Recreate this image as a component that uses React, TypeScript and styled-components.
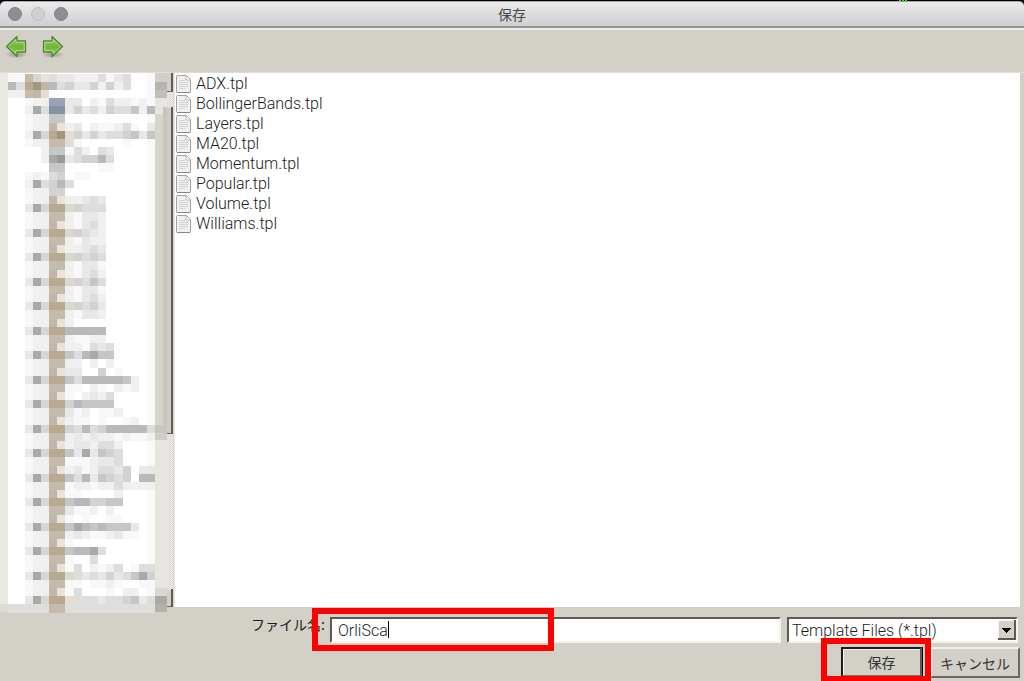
import React from "react";
import styled, { createGlobalStyle } from "styled-components";

const latin = `Roboto, "Noto Sans CJK JP", sans-serif`;
const japanese = `"Noto Sans CJK JP", sans-serif`;
const face = "#d3d0c8";

const GlobalStyle = createGlobalStyle`
  *, *::before, *::after { box-sizing: border-box; }
  body { margin: 0; background: #000; color: #1c1c1c; font-family: ${latin}; overflow: hidden; }
`;

const Dialog = styled.div`
  position: relative;
  display: flex;
  flex-direction: column;
  min-height: 100vh;
  padding-top: 1px;
`;

const Sparks = styled.svg`
  position: absolute;
  top: 0;
  right: 115px;
  display: block;
`;

const TitleBar = styled.header`
  display: flex;
  align-items: center;
  height: 27px;
  padding: 0 8px;
  border-top: 1px solid #aaa8aa;
  border-bottom: 2px solid #949494;
  border-radius: 5px 5px 0 0;
  background: linear-gradient(#ebe9eb, #d0d0d0);
`;

const Lights = styled.div`
  display: flex;
  flex: 1;
  gap: 9px;
`;

const Light = styled.button<{ $idle?: boolean }>`
  width: 14px;
  height: 14px;
  padding: 0;
  border: 1px solid ${(p) => (p.$idle ? "#bdbdbd" : "#848388")};
  border-radius: 50%;
  background: ${(p) => (p.$idle ? "#d0d0d0" : "#8e8d93")};
`;

const Title = styled.h1`
  margin: 0;
  font: 400 14px/20px ${japanese};
  color: #484848;
`;

const Filler = styled.div`
  flex: 1;
`;

const Toolbar = styled.nav`
  display: flex;
  gap: 11px;
  height: 45px;
  padding: 5px 4px;
  border-top: 2px solid #ecebe9;
  border-bottom: 1px solid #dedcd6;
  background: ${face};
`;

const ToolButton = styled.button`
  width: 25px;
  height: 25px;
  padding: 0;
  border: 0;
  background: none;
`;

const Body = styled.main`
  display: flex;
  flex: 1;
  padding-right: 4px;
  background: ${face};
`;

const TreePane = styled.aside`
  position: relative;
  z-index: 1;
  flex: none;
  width: 174px;
  height: 534px;
`;

const TreeArt = styled.svg`
  display: block;
  overflow: visible;
`;

const FileList = styled.ul`
  flex: 1;
  margin: 0;
  padding: 1px;
  list-style: none;
  background: #fff;
  border-left: 1px solid #eceae6;
`;

const FileRow = styled.li`
  display: flex;
  align-items: center;
  gap: 5px;
  height: 20px;
  font-size: 16px;
  font-weight: 300;
  line-height: 20px;
`;

const Footer = styled.form`
  display: flex;
  flex-direction: column;
  gap: 4px;
  height: 74px;
  padding: 10px 4px 0 251px;
  background: ${face};
`;

const FieldRow = styled.div`
  display: flex;
  gap: 6px;
  padding-right: 2px;
`;

const Label = styled.label`
  width: 73px;
  font: 400 14px/14px ${japanese};
  white-space: nowrap;
`;

const Field = styled.div<{ $width?: number }>`
  position: relative;
  display: flex;
  flex: ${(p) => (p.$width ? `0 0 ${p.$width}px` : "1")};
  height: 26px;
`;

const sunken = `
  width: 100%;
  border: 2px solid;
  border-color: #5c5a57 #f4f3f0 #f4f3f0 #5c5a57;
  border-radius: 0;
  outline: 0;
  background: #fff;
  color: #1c1c1c;
  font-family: ${latin};
  font-size: 16px;
  font-weight: 300;
`;

const TextInput = styled.input`
  ${sunken}
  padding: 0 6px;
`;

const Select = styled.select`
  ${sunken}
  appearance: none;
  padding: 0 20px 0 3px;
`;

const Caret = styled.span`
  position: absolute;
  left: 58px;
  top: 4px;
  width: 1px;
  height: 17px;
  background: #000;
`;

const SelectArrow = styled.svg`
  position: absolute;
  right: 2px;
  top: 3px;
  pointer-events: none;
`;

const Highlight = styled.span<{ $kind: "field" | "button" }>`
  position: absolute;
  z-index: 2;
  top: -9px;
  left: ${(p) => (p.$kind === "field" ? -18 : -20)}px;
  width: ${(p) => (p.$kind === "field" ? 242 : 110)}px;
  height: ${(p) => (p.$kind === "field" ? 43 : 44)}px;
  border: 6px solid #fe0000;
  pointer-events: none;
`;

const Actions = styled.div`
  display: flex;
  justify-content: flex-end;
  gap: 8px;
`;

const ButtonSlot = styled.div`
  position: relative;
`;

const Button = styled.button<{ $primary?: boolean }>`
  display: block;
  width: ${(p) => (p.$primary ? 81 : 90)}px;
  height: ${(p) => (p.$primary ? 30 : 31)}px;
  padding: 0;
  border: 2px solid;
  border-color: ${(p) => (p.$primary ? "#1c1c1c #5a5957 #77756f #1c1c1c" : "#f0efec #6a6966 #6a6966 #f0efec")};
  box-shadow: ${(p) => (p.$primary ? "inset 1px 1px #f4f3f0, 1px 0 #000" : "none")};
  background: ${face};
  color: #333;
  font: 400 14px/24px ${japanese};
`;

const palette: Record<string, string> = {
  a: "#f8f8f8", b: "#f0f0f0", c: "#e8e8e8", d: "#dddddd", e: "#d2d2d2",
  f: "#c6c6c6", g: "#b9b9b9", h: "#a9a9a9", i: "#989a98",
  T: "#c1b6a7", U: "#ebe3d9", V: "#b7aa90", W: "#a3967f", X: "#c4bbac",
  Y: "#e5ddd4", Z: "#d9d5cf", y: "#dad8cf", P: "#98a4b6", Q: "#8591a4",
  G: "#c5c8c5", o: "#dedfda",
};

// Columns 1 to 19 of the tree's first five entries, three lines an entry.
const headLines = [
  "aaXZUdccbbbdacd..a",
  "gdVWTgdeccebebd..a",
  "bbXTY............a",
  "..abbPPcc.badbbaba",
  "..bhdQQcecdbeddfbg",
  "..abbGG...........",
  "..abbTUbc.baabda.c",
  "..bhZVWYececddefcf",
  "..abbXXYa.....a...",
  "....bGGadb.dc.....",
  "....bhicdeegd.....",
  ".....ff....aa.....",
  "..abade.aa........",
  "..bhdegd..........",
  "..abbee...........",
];

// Columns 8 to 19 of every folder entry: upper, middle and lower line.
const folders = [
  ["bbcdc", "yeddd", "baccb"],
  ["bacdb", "yedcb", "bacbb"],
  ["bbcdc", "yeded", "bacca"],
  ["bacdb", "yedfd", "bacca"],
  ["bacdb", "yedec", "baccb"],
  ["b", "ggggg", "baabb"],
  ["bbadcd", "fdghff", "bb.b.b"],
  ["cc..e.a", "fdgggggfb", "aa.ba.bab"],
  ["a.bcbd", "egffff", "cab.aab"],
  ["baa.a..ab", "edgdegggggdf", "bcbcbbabaab"],
  ["bccbddb", "fchcfed", "aaabccd"],
  ["bcabddce.cc", "fdgcfede.gg", "abbabbdbbbb"],
  ["aa....b", "fggeeff", "caab.b"],
  ["a.a..aa", "fhgfgfffc", "bcbaabcaa"],
  ["a......", "fgghd", "a..d"],
  ["ad.babd.add", "ydcdcecdfhe", "aa.aaba..aa"],
  ["ad...a.bb.a", "Ydddcddefcd", "ooooooooooo"],
];

const lines = [
  ...headLines,
  ...folders.flatMap(([upper, middle, lower], i) => [
    "..abbTU" + upper,
    "..chZVV" + middle,
    (i === folders.length - 1 ? "oooooXX" : "..abbXX") + lower,
  ]),
];

const CELL = 49 / 6;

function Tree() {
  return (
    <TreeArt width="174" height="539" viewBox="0 73 174 539" role="img" aria-label="Folders" shapeRendering="crispEdges">
      <defs>
        <pattern id="trough" width="2" height="2" patternUnits="userSpaceOnUse">
          <rect width="2" height="2" fill="#f1f0ed" />
          <rect width="1" height="1" fill="#d8d5cf" />
          <rect x="1" y="1" width="1" height="1" fill="#d8d5cf" />
        </pattern>
      </defs>
      <rect y="73" width="174" height="534" fill="#fff" />
      <rect y="73" width="8" height="531" fill="#eae9e4" />
      <rect y="604" width="8" height="8" fill="#dddcd6" />
      <rect x="147" y="73" width="8" height="531" fill="#f9f9f7" />
      <rect x="155" y="73" width="19" height="534" fill="#e7e5e0" />
      <rect x="155" y="114" width="8" height="320" fill="#d8d5cd" />
      <rect x="163" y="107" width="4" height="333" fill="#c7c5bf" />
      <rect x="155" y="434" width="12" height="6" fill="#cfcdc7" />
      <rect x="167" y="73" width="5" height="534" fill="url(#trough)" />
      <rect x="167" y="73" width="4" height="18" fill={face} />
      <rect x="167" y="108" width="4" height="325" fill="#cfccc4" />
      <rect x="167" y="590" width="4" height="16" fill={face} />
      {lines.map((line, row) =>
        [...line].map((code, col) =>
          palette[code] ? (
            <rect
              key={`${row}-${col}`}
              x={(col + 1) * CELL}
              y={Math.max(73, (row + 9) * CELL)}
              width={CELL}
              height={CELL}
              fill={palette[code]}
            />
          ) : null
        )
      )}
      <rect x="155" y="73" width="12" height="9" fill="#cfcec9" />
      <rect x="155" y="82" width="12" height="8" fill="#b5b4af" />
      <rect x="155" y="90" width="12" height="8" fill="#c0bfba" />
      <rect x="155" y="588" width="12" height="8" fill="#d9d7d1" />
      <rect x="155" y="596" width="12" height="8" fill="#aaa9a3" />
      <rect x="155" y="604" width="12" height="8" fill="#b3b1aa" />
      <path d="M167 91.500h5M167 433.500h5M167 606.500h5" stroke="#666" />
      <path d="M172 73v19M172 107v327M172 589v18" stroke="#5c5c5c" strokeWidth="2" />
      <path d="M173.500 73v534" stroke="#d8d6d0" />
    </TreeArt>
  );
}

function Arrow({ forward }: { forward?: boolean }) {
  return (
    <svg width="25" height="25" viewBox="0 0 25 25">
      <defs>
        <linearGradient id={forward ? "fwd" : "bwd"} x1="0" y1="0" x2="0" y2="1">
          <stop offset="0" stopColor="#a2cd7c" />
          <stop offset=".5" stopColor="#73b536" />
          <stop offset="1" stopColor="#8acb50" />
        </linearGradient>
        <radialGradient id={forward ? "fwdShade" : "bwdShade"}>
          <stop offset="0" stopColor="#706d64" stopOpacity=".6" />
          <stop offset="1" stopColor="#706d64" stopOpacity="0" />
        </radialGradient>
      </defs>
      <g transform={forward ? "translate(25 0)scale(-1 1)" : undefined}>
        <ellipse cx="12.500" cy="19.500" rx="11.500" ry="4" fill={`url(#${forward ? "fwdShade" : "bwdShade"})`} />
        <path d="M2.500 11.500 13 1.500v4.500H21.500v11H13v4.500z" fill={`url(#${forward ? "fwd" : "bwd"})`} stroke="#548530" strokeWidth="1.300" strokeLinejoin="round" />
        <path d="M4.500 11.500 11.800 4.500v2.800H20.200v8.400H11.800v2.800z" fill="none" stroke="#b5d995" strokeWidth="1" />
      </g>
    </svg>
  );
}

function FileIcon() {
  return (
    <svg width="15" height="18" viewBox="0 0 15 18">
      <path d="M1.500.500h9l4 4v12q0 1-1 1h-12q-1 0-1-1v-15q0-1 1-1z" fill="#f0f0ef" stroke="#a2a3a0" />
      <path d="M10 1v4h4.500" fill="#fff" stroke="#b4b4b4" />
      <path d="M3 5.500h6M3 7.500h9M3 9.500h9M3 11.500h9M3 13.500h6" stroke="#d3d3d3" />
      <path d="M1 17.500h13" stroke="#858683" />
    </svg>
  );
}

const files = [
  "ADX.tpl",
  "BollingerBands.tpl",
  "Layers.tpl",
  "MA20.tpl",
  "Momentum.tpl",
  "Popular.tpl",
  "Volume.tpl",
  "Williams.tpl",
];

export default function App() {
  return (
    <>
      <GlobalStyle />
      <Dialog>
        <Sparks width="10" height="2">
          <path d="M1 0v1M4 0v2M7 0v2" stroke="#55c832" strokeWidth="2" />
        </Sparks>
        <TitleBar>
          <Lights>
            <Light aria-label="Close" />
            <Light $idle aria-label="Minimize" />
            <Light aria-label="Zoom" />
          </Lights>
          <Title>保存</Title>
          <Filler />
        </TitleBar>
        <Toolbar>
          <ToolButton aria-label="Back"><Arrow /></ToolButton>
          <ToolButton aria-label="Forward"><Arrow forward /></ToolButton>
        </Toolbar>
        <Body>
          <TreePane><Tree /></TreePane>
          <FileList>
            {files.map((name) => (
              <FileRow key={name}><FileIcon />{name}</FileRow>
            ))}
          </FileList>
        </Body>
        <Footer onSubmit={(e) => e.preventDefault()}>
          <FieldRow>
            <Label htmlFor="filename">ファイル名:</Label>
            <Field>
              <TextInput id="filename" defaultValue="OrliSca" />
              <Caret />
              <Highlight $kind="field" />
            </Field>
            <Field $width={231}>
              <Select aria-label="File type">
                <option>Template Files (*.tpl)</option>
              </Select>
              <SelectArrow width="18" height="20" viewBox="0 0 18 20" shapeRendering="crispEdges">
                <rect width="18" height="20" fill={face} />
                <path d="M.5 20V.5H18" fill="none" stroke="#f4f3f0" />
                <path d="M17 0v19H0" fill="none" stroke="#5c5a57" strokeWidth="2" />
                <path d="M4 8h9l-4.500 5z" fill="#000" />
              </SelectArrow>
            </Field>
          </FieldRow>
          <Actions>
            <ButtonSlot>
              <Button $primary type="submit">保存</Button>
              <Highlight $kind="button" />
            </ButtonSlot>
            <Button type="button">キャンセル</Button>
          </Actions>
        </Footer>
      </Dialog>
    </>
  );
}
